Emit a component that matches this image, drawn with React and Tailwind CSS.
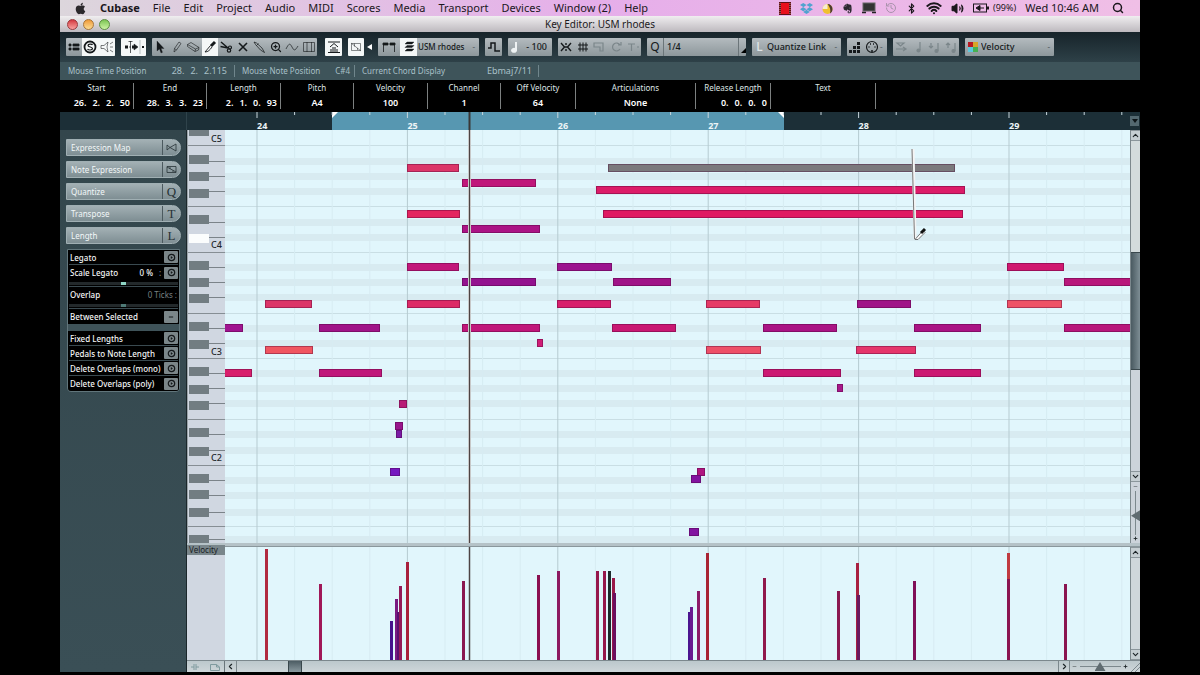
import React, { useState } from "react";
import {
  Bluetooth,
  ChevronDown,
  ChevronLeft,
  ChevronRight,
  ChevronUp,
  History,
  Minus,
  Plus,
  Search,
  Volume2,
  Wifi,
  ZoomIn,
} from "lucide-react";
import { FaApple, FaDropbox, FaEvernote } from "react-icons/fa";

const menus = [
  "File", "Edit", "Project", "Audio", "MIDI", "Scores",
  "Media", "Transport", "Devices", "Window (2)", "Help",
];

const infoLine = [
  { label: "Start", value: ["26.", "2.", "2.", "50"] },
  { label: "End", value: ["28.", "3.", "3.", "23"] },
  { label: "Length", value: ["2.", "1.", "0.", "93"] },
  { label: "Pitch", value: "A4" },
  { label: "Velocity", value: "100" },
  { label: "Channel", value: "1" },
  { label: "Off Velocity", value: "64" },
  { label: "Articulations", value: "None" },
  { label: "Release Length", value: ["0.", "0.", "0.", "0"] },
  { label: "Text", value: "" },
];

// piano roll geometry
const BEAT = 37.6;
const FIRST_BAR = 32;
const blackRows = [31, 46, 61, 92, 107, 137, 152, 167, 198, 213, 243, 258, 273, 304, 320, 350, 365, 382, 409];
const whiteSplits = [15, 76, 122, 183, 228, 289, 335, 396];
const blackKeys = [-3, 25, 42, 59, 85, 104, 131, 148, 164, 192, 210, 237, 255, 271, 298, 317, 344, 360, 378, 405];
const octaves = [
  { name: "C5", y: 12 },
  { name: "C4", y: 118 },
  { name: "C3", y: 225 },
  { name: "C2", y: 331 },
];

// x, top, width, colour
const notes = [
  [182, 34, 52, "#dc3568"],
  [383, 34, 347, "#7b797c"],
  [237, 49, 74, "#c0177a"],
  [371, 56, 369, "#dc1c68"],
  [182, 80, 53, "#e42560"],
  [378, 80, 360, "#e01a63"],
  [237, 95, 78, "#ab1385"],
  [182, 133, 52, "#c2177a"],
  [332, 133, 55, "#9c148f"],
  [782, 133, 57, "#d0186f"],
  [237, 148, 74, "#93128f"],
  [388, 148, 58, "#a01488"],
  [839, 148, 300, "#b8177b"],
  [40, 170, 47, "#dc3568"],
  [182, 170, 53, "#dd2a66"],
  [332, 170, 54, "#d81f6c"],
  [481, 170, 54, "#e63a66"],
  [632, 170, 54, "#a01488"],
  [782, 170, 55, "#ee5266"],
  [-10, 194, 28, "#a01490"],
  [94, 194, 61, "#a01488"],
  [237, 194, 78, "#c0177a"],
  [387, 194, 64, "#c91872"],
  [538, 194, 74, "#aa1484"],
  [689, 194, 67, "#aa1484"],
  [839, 194, 300, "#b8177b"],
  [312, 209, 6, "#cf1d75"],
  [40, 216, 48, "#f05560"],
  [481, 216, 55, "#ee5068"],
  [631, 216, 60, "#e5356a"],
  [-10, 239, 37, "#d81f6c"],
  [94, 239, 63, "#c0177a"],
  [538, 239, 78, "#cc1872"],
  [689, 239, 67, "#cc1872"],
  [612, 254, 6, "#a8188a"],
  [174, 270, 8, "#b81c76"],
  [170, 292, 8, "#99158c"],
  [171, 300, 6, "#7a1aa5"],
  [165, 338, 10, "#7518c0"],
  [472, 338, 8, "#b01680"],
  [466, 345, 10, "#8213a0"],
  [464, 398, 10, "#8213a0"],
];

// x, height, colour
const velocities = [
  [40, 112, "#b02a40"],
  [94, 77, "#a01858"],
  [165, 40, "#45128c"],
  [170, 62, "#7a1a80"],
  [172, 49, "#5a1070"],
  [174, 75, "#941a58"],
  [181, 99, "#a8203c"],
  [237, 80, "#8a1850"],
  [312, 86, "#8a1050"],
  [332, 90, "#8c1a60"],
  [371, 90, "#96184c"],
  [378, 90, "#96184c"],
  [383, 90, "#1c2a2c"],
  [387, 83, "#9a1848"],
  [388, 68, "#6a1060"],
  [463, 49, "#4a1490"],
  [465, 54, "#6a1a90"],
  [472, 70, "#8c1a68"],
  [481, 108, "#a82434"],
  [538, 83, "#90184c"],
  [612, 70, "#8a1850"],
  [631, 98, "#a82040"],
  [632, 66, "#6a1a60"],
  [688, 80, "#801058"],
  [782, 108, "#c03a40"],
  [782, 82, "#8a1450"],
  [839, 77, "#8a1450"],
];

function ToolGroup({ children, className = "" }) {
  return (
    <div className={`flex h-[18px] items-stretch overflow-hidden rounded-[1px] bg-gradient-to-b from-[#b4bbbf] to-[#8d979b] ${className}`}>
      {children}
    </div>
  );
}

function Tool({ label, active, dim, children }) {
  return (
    <button
      aria-label={label}
      className={`flex flex-1 items-center justify-center ${active ? "bg-[#f4f7f7]" : ""} ${dim ? "text-[#7b868a]" : "text-[#15191b]"}`}
    >
      {children}
    </button>
  );
}

function Glyph({ children, fill = "none", width = 14 }) {
  return (
    <svg width={width} height="14" viewBox={`0 0 ${width} 14`} fill={fill} stroke="currentColor" strokeWidth="1.2" className="shrink-0">
      {children}
    </svg>
  );
}

function MenuBar() {
  return (
    <header className="flex h-4 items-center bg-gradient-to-r from-[#dcd6dc] via-[#e6aeea] to-[#f0bfe6] pr-4 pl-[14px] text-[11px] leading-4 text-[#1b171c]">
      <FaApple size={13} className="mr-[13px] text-[#2b282c]" />
      <nav className="flex gap-[13px] whitespace-nowrap">
        <button className="font-bold">Cubase</button>
        {menus.map((m) => (
          <button key={m}>{m}</button>
        ))}
      </nav>
      <div className="ml-auto flex items-center gap-[9px] whitespace-nowrap">
        <svg width="12" height="13" viewBox="0 0 12 13">
          <rect width="12" height="13" fill="#5d1016" />
          <rect x="2" y="1" width="8" height="11" fill="#e8101c" />
          <path d="M1 1v11M11 1v11" stroke="#c98" strokeDasharray="1 1" />
        </svg>
        <FaDropbox size={13} className="text-[#4fa3cf]" />
        <svg width="11" height="11" viewBox="0 0 11 11">
          <circle cx="5.500" cy="6" r="5" fill="#f0c030" />
          <path d="M5.500 6V1a5 5 0 0 0-5 5z" fill="#f6ecd0" />
          <path d="M5.500 1a5 5 0 0 1 5 5c0 2-1 3.500-2.500 4.500C9 7 8 4 5.500 1z" fill="#4a3a30" />
        </svg>
        <FaEvernote size={11} className="text-[#2b2830]" />
        <svg width="14" height="12" viewBox="0 0 14 12">
          <rect x="1" y="1" width="12" height="8" fill="#333" stroke="#666" />
          <path d="M0 10.500h4M10 10.500h4" stroke="#222" strokeWidth="1.500" />
        </svg>
        <History size={12} className="text-[#a892ab]" />
        <Bluetooth size={11} strokeWidth={2.5} />
        <Wifi size={16} strokeWidth={3} />
        <Volume2 size={13} fill="currentColor" />
        <div className="flex items-center gap-1">
          <svg width="16" height="10" viewBox="0 0 16 10" fill="none" stroke="currentColor">
            <rect x=".5" y="1" width="13" height="8" />
            <path d="M15 3.500v3" strokeWidth="2" />
            <path d="M3 5l4-2.500v5zM7 5h4" fill="currentColor" />
          </svg>
          <span className="text-[9px]">(99%)</span>
        </div>
        <span>Wed 10:46 AM</span>
        <Search size={12} strokeWidth={3} className="ml-1" />
      </div>
    </header>
  );
}

function TitleBar() {
  return (
    <div className="relative flex h-4 items-center justify-center bg-gradient-to-b from-[#f0eef0] to-[#bdb9be] text-[10px] leading-4 text-[#1c1a1d]">
      <div className="absolute left-[7px] flex gap-[5px]">
        <button aria-label="Close" className="h-[11px] w-[11px] rounded-full border border-[#9b3a3e] bg-gradient-to-b from-[#d3343f] to-[#f8a0a0]" />
        <button aria-label="Minimize" className="h-[11px] w-[11px] rounded-full border border-[#a8763a] bg-gradient-to-b from-[#ee9a35] to-[#fbdc90]" />
        <button aria-label="Zoom" className="h-[11px] w-[11px] rounded-full border border-[#5c8f42] bg-gradient-to-b from-[#7cc552] to-[#cdf3a4]" />
      </div>
      <h1>Key Editor: USM rhodes</h1>
    </div>
  );
}

function Toolbar() {
  return (
    <div className="flex h-[30px] items-center gap-[6px] bg-gradient-to-b from-[#17242a] to-[#2e4148] px-[6px] text-[8px] font-medium text-[#15191b]">
      <ToolGroup className="w-[49px]">
        <Tool label="Window layout">
          <Glyph fill="currentColor"><path d="M2 4h2v2H2zM6 4h6v2H6zM2 8h2v2H2zM6 8h6v2H6z" strokeWidth=".8" /></Glyph>
        </Tool>
        <Tool label="Solo editor" active>
          <Glyph>
            <circle cx="7" cy="7" r="5.500" strokeWidth="1.800" />
            <path d="M9.500 5C9 3.800 5 3.700 5 5.500s4.500 1.200 4.500 3S5.500 10.500 4.500 9" />
          </Glyph>
        </Tool>
        <Tool label="Acoustic feedback" active>
          <Glyph><path d="M1 5.500h3L8 2l-1 5 1 5-4-3.500H1zM10 4l3-2M10 7h3M10 10l3 2" strokeWidth=".8" opacity=".7" /></Glyph>
        </Tool>
      </ToolGroup>
      <ToolGroup className="w-[25px]">
        <Tool label="Auto-scroll" active>
          <Glyph width={24}>
            <path d="M3 7h3M10 7h3" strokeWidth="3" />
            <path d="M12 4l4 3-4 3z" fill="currentColor" strokeWidth=".5" />
            <path d="M7 7h2M8.500 1v12M6.500 1.500h4" strokeWidth=".7" />
            <path d="M18 0v14" stroke="#a9b1b4" strokeWidth=".8" />
            <path d="M20 7h2" strokeWidth="2" />
          </Glyph>
        </Tool>
      </ToolGroup>
      <ToolGroup className="w-[165px]">
        <Tool label="Select">
          <Glyph fill="currentColor"><path d="M4 1v10l2.500-2 1.500 4 1.500-.7L8 8.500h3z" strokeWidth=".3" /></Glyph>
        </Tool>
        <Tool label="Draw">
          <Glyph><path d="m4 12 .5-3.500 4.500-6.500 2 1.500-4.500 6.500zM4.500 8.500l2 1.500" strokeWidth=".8" opacity=".75" /></Glyph>
        </Tool>
        <Tool label="Erase">
          <Glyph><path d="M1.500 4.500 5 2.500l8 5-.5 2.500L9 11.500l-7.500-5zM1.500 4.500l8 4.500 3.500-1.500M9.500 9 9 11.500" strokeWidth=".8" opacity=".75" /></Glyph>
        </Tool>
        <Tool label="Trim" active>
          <Glyph>
            <path d="m8 6 4-4" strokeWidth="3" />
            <path d="M7.500 5.500 2 12c3 0 5-2 7-5" strokeWidth=".9" />
          </Glyph>
        </Tool>
        <Tool label="Split">
          <Glyph>
            <path d="M2 2l7 6M1.500 6.500 9 8" strokeWidth="1.500" />
            <circle cx="10" cy="10.500" r="1.700" />
            <circle cx="11" cy="7.500" r="1.500" />
          </Glyph>
        </Tool>
        <Tool label="Mute"><Glyph><path d="M3 3l8 8M11 3l-8 8" strokeWidth="1.600" /></Glyph></Tool>
        <Tool label="Glue">
          <Glyph><path d="m2 2 2.500 1 5.500 5 2.500 4.500L8.500 10 3.500 4.500zM4.500 5.500l2-2" strokeWidth=".9" opacity=".8" /></Glyph>
        </Tool>
        <Tool label="Zoom"><ZoomIn size={12} strokeWidth={2.5} /></Tool>
        <Tool label="Line"><Glyph><path d="M1 9c3-6 4-6 6-2s3 4 6-1" strokeWidth=".9" opacity=".75" /></Glyph></Tool>
        <Tool label="Time warp"><Glyph><path d="M1.500 2.500h11v9h-11zM5 2v10M9.500 2v10" strokeWidth=".8" opacity=".75" /></Glyph></Tool>
      </ToolGroup>
      <ToolGroup className="ml-[2px] w-[17px]">
        <Tool label="Show controllers" active>
          <Glyph><path d="M1 2h12M1 12.500h12M3 7l4-3.500L11 7" strokeWidth="1" /><path d="M4 12V9M6 12V7M8 12V7M10 12V9" strokeWidth="1" /></Glyph>
        </Tool>
      </ToolGroup>
      <ToolGroup className="w-[16px]">
        <Tool label="Show note expression" active>
          <Glyph><path d="M2.500 3.500h9v7h-9zM2 3l10 8M5.500 3.500v3M8.500 10V8" strokeWidth=".7" opacity=".7" /></Glyph>
        </Tool>
      </ToolGroup>
      <button aria-label="More tools" className="-ml-[4px] text-white">
        <svg width="6" height="8" viewBox="0 0 6 8" fill="currentColor"><path d="M6 1v6L1 4z" /></svg>
      </button>
      <ToolGroup className="w-[101px]">
        <button aria-label="Part borders" className="flex w-[22px] items-center justify-center">
          <Glyph fill="currentColor"><path d="M1 3h5v2H1zM8 3h5v2H8zM1.500 3v9M12.500 3v9" strokeWidth=".8" /></Glyph>
        </button>
        <button aria-label="Edit active part only" className="flex w-[17px] items-center justify-center bg-[#f4f7f7]">
          <Glyph fill="currentColor"><path d="M5 2h7l-2 2H3zM5 5.500h7l-2 2H3zM5 9h7l-2 2H3z" strokeWidth=".4" /></Glyph>
        </button>
        <select aria-label="Edited part" className="min-w-0 flex-1 appearance-none bg-transparent pl-px">
          <option>USM rhodes</option>
        </select>
        <span className="self-center pr-1 text-[#5d676b]">-</span>
      </ToolGroup>
      <ToolGroup className="w-[17px]">
        <Tool label="Step input"><Glyph><path d="M1 8h3V3h4v8h5" strokeWidth="1.500" /></Glyph></Tool>
      </ToolGroup>
      <ToolGroup className="w-[44px]">
        <svg width="14" height="14" viewBox="0 0 14 14" fill="#eef2f3" className="self-center"><path d="M7 2h2v8a3 2.500 0 1 1-2-2z" /></svg>
        <input aria-label="Insert velocity" defaultValue="- 100" className="w-[25px] min-w-0 bg-transparent text-right text-[9px]" />
      </ToolGroup>
      <ToolGroup className="w-[83px]">
        <Tool label="Snap to zero"><Glyph><path d="M2 3l3.500 4L2 11M12 3 8.500 7l3.500 4M7 3v2M7 9v2M5 7h4" strokeWidth="1.400" /></Glyph></Tool>
        <Tool label="Snap"><Glyph><path d="M4 2.500v9M7 2.500v9M10 2.500v9M2 5h10M2 9h10" strokeWidth="1" /></Glyph></Tool>
        <Tool label="Snap type" dim><Glyph><path d="M2 3h9v8H8V7H2z" /></Glyph></Tool>
        <Tool label="Snap cycle" dim><Glyph><path d="M11 5a4 4 0 1 0 0 4M9 5h3V2" /></Glyph></Tool>
        <Tool label="Snap grid" dim><Glyph><path d="M2 4h7M5.500 4v7M11 7h2" /></Glyph></Tool>
      </ToolGroup>
      <ToolGroup className="w-[99px]">
        <span className="w-[17px] border-r border-[#6b7579] text-center text-[12px] leading-[18px] font-normal">Q</span>
        <select aria-label="Quantize preset" className="min-w-0 flex-1 appearance-none bg-transparent pl-[3px] text-[9px]">
          <option>1/4</option>
        </select>
        <span className="flex w-2 items-end justify-end border-l border-[#6b7579] pb-[3px]">
          <svg width="5" height="5"><path d="M5 0v5H0z" /></svg>
        </span>
      </ToolGroup>
      <ToolGroup className="w-[89px]">
        <span className="w-[15px] text-center text-[12px] leading-[18px] text-[#dfe5e7]">L</span>
        <select aria-label="Length quantize" className="min-w-0 flex-1 appearance-none bg-transparent text-[9px]">
          <option>Quantize Link</option>
        </select>
        <span className="self-center pr-1 text-[#5d676b]">-</span>
      </ToolGroup>
      <ToolGroup className="w-[40px]">
        <Tool label="Step input mode">
          <svg width="12" height="12" viewBox="0 0 12 12" fill="currentColor">
            <path d="M0 9h3v3H0zM4 9h3v3H4zM8 9h3v3H8zM4 5h3v3H4zM8 5h3v3H8zM8 1h3v3H8z" />
          </svg>
        </Tool>
        <Tool label="MIDI input">
          <Glyph>
            <circle cx="7" cy="7" r="5.500" />
            <path d="M3.500 7h1M5 4h1M8 4h1M9.500 7h1M7 10v2" strokeWidth="1.500" />
          </Glyph>
        </Tool>
        <span className="w-[7px] self-center text-[#5d676b]">-</span>
      </ToolGroup>
      <ToolGroup className="w-[66px]">
        <Tool label="Move insert position" dim><Glyph><path d="M3 3h7L6.500 6zM2 9h9M9 7l3 2-3 2" /></Glyph></Tool>
        <Tool label="Record pitch" dim><Glyph><path d="M9 2v8" /><circle cx="7.500" cy="10.500" r="1.500" fill="currentColor" /></Glyph></Tool>
        <Tool label="Record note-on velocity" dim><Glyph><path d="M11 3v8M4 3v5M2 6l2 2 2-2" /><circle cx="9.500" cy="11" r="1.500" fill="currentColor" /></Glyph></Tool>
        <Tool label="Record note-off velocity" dim><Glyph><path d="M11 3v8M4 8V3M2 5l2-2 2 2" /><circle cx="9.500" cy="11" r="1.500" fill="currentColor" /></Glyph></Tool>
      </ToolGroup>
      <ToolGroup className="w-[89px]">
        <svg width="10" height="10" viewBox="0 0 10 10" className="mx-[3px] shrink-0 self-center">
          <rect width="10" height="10" fill="#333" />
          <rect width="5" height="5" fill="#b81822" />
          <rect x="5" width="5" height="5" fill="#d8a428" />
          <rect y="5" width="5" height="5" fill="#5cc8dc" />
          <rect x="5" y="5" width="5" height="5" fill="#46b052" />
        </svg>
        <select aria-label="Event colors" className="min-w-0 flex-1 appearance-none bg-transparent text-[9px]">
          <option>Velocity</option>
        </select>
        <span className="self-center pr-1 text-[#5d676b]">-</span>
      </ToolGroup>
    </div>
  );
}

function StatusLine() {
  return (
    <div className="flex h-[18px] items-center bg-[#3e545a] text-[8px] leading-[12px] whitespace-nowrap text-[#a9c0c8]">
      <div className="flex w-[175px] justify-between border-r border-[#70868c] pr-[7px] pl-2">
        <span>Mouse Time Position</span>
        <span className="flex gap-[6px] text-[9px]"><span>28.</span><span>2.</span><span>2.115</span></span>
      </div>
      <div className="flex w-[120px] justify-between border-r border-[#70868c] pr-[4px] pl-[7px]">
        <span>Mouse Note Position</span>
        <span>C#4</span>
      </div>
      <div className="flex w-[184px] justify-between border-r border-[#70868c] pr-[6px] pl-[7px]">
        <span>Current Chord Display</span>
        <span className="text-[9px]">Ebmaj7/11</span>
      </div>
    </div>
  );
}

function InfoLine() {
  return (
    <dl className="grid h-8 grid-cols-[74px_73px_74px_73px_74px_73px_75px_120px_75px_105px] bg-black py-[3px] whitespace-nowrap text-white">
      {infoLine.map((f) => (
        <div key={f.label} className="border-r border-[#7c8080] text-center">
          <dt className="text-[8px] leading-[10px] text-[#dfe5e6]">{f.label}</dt>
          {Array.isArray(f.value) ? (
            <dd className="mt-1 flex justify-end gap-[6px] pr-[3px] text-[9px] leading-[12px] font-semibold">
              {f.value.map((v, i) => (
                <span key={i}>{v}</span>
              ))}
            </dd>
          ) : (
            <dd className="mt-1 text-[9px] leading-[12px] font-semibold">{f.value}</dd>
          )}
        </div>
      ))}
    </dl>
  );
}

function Ruler() {
  const start = 70;
  const ticks = Array.from({ length: 60 }, (_, i) => i);
  return (
    <div className="flex h-[18px] items-start bg-[#1c2f37]">
      <div className="h-full w-[127px] border-r border-[#2f434b]" />
      {/* taller than the bar, the lanes below cover the rest */}
      <svg className="h-[24px] min-w-0 flex-1">
        <rect x="145" y="0" width="452" height="18" fill="#5797b1" />
        <path d="M145 0h6l-6 6zM597 0h-6l6 6z" fill="#fff" />
        {ticks.map((i) => (
          <line key={i} x1={start + i * BEAT} x2={start + i * BEAT} y1="0" y2={i % 4 ? 3 : 6} stroke="#c7d6dc" />
        ))}
        {[24, 25, 26, 27, 28, 29].map((bar, i) => (
          <text key={bar} x={start + i * 4 * BEAT} y="17" fontSize="9" fontWeight="700" fill="#eef5f7">
            {bar}
          </text>
        ))}
        <path d="M282.500 0v18" stroke="#3a3635" strokeWidth="2" />
      </svg>
      <button aria-label="Ruler format" className="mt-[4px] mr-[1px] flex h-[10px] w-[9px] items-center justify-center bg-[#536870] text-[#0d1518]">
        <svg width="6" height="4"><path d="M0 0h6L3 4z" fill="currentColor" /></svg>
      </button>
    </div>
  );
}

function SectionHeader({ label, open, children }) {
  return (
    <button
      aria-expanded={open}
      className="flex h-[17px] w-[115px] items-center overflow-hidden rounded-l-[2px] rounded-r-full border border-[#a0afb3] bg-gradient-to-b from-[#a3b0b4] to-[#7e8e93] text-left text-[8px] text-[#f2f7f8]"
    >
      <span className="flex-1 pl-1">{label}</span>
      <span className="flex h-full w-[18px] items-center justify-center border-l border-[#4c5a5f] font-['Liberation_Serif',serif] text-[13px] leading-none text-[#273236]">
        {children}
      </span>
    </button>
  );
}

function ApplyButton({ label }) {
  return (
    <button aria-label={label} className="flex h-[12px] w-[14px] items-center justify-center rounded-[1px] bg-[#7b8689] text-[#15191b]">
      <svg width="9" height="9" viewBox="0 0 9 9" fill="none" stroke="currentColor">
        <circle cx="4.500" cy="4.500" r="3.200" strokeWidth="1.200" />
        <path d="M4 3.500v2l1.500-1z" fill="currentColor" strokeWidth=".5" />
      </svg>
    </button>
  );
}

function ParamSlider({ label, value, onChange, dim }) {
  return (
    <input
      type="range"
      aria-label={label}
      value={value}
      onChange={(e) => onChange(Number(e.target.value))}
      className={`block h-[3px] w-full appearance-none bg-[#23292b] [&::-webkit-slider-thumb]:h-[3px] [&::-webkit-slider-thumb]:w-[5px] [&::-webkit-slider-thumb]:appearance-none ${
        dim ? "[&::-webkit-slider-thumb]:bg-[#4e7a76]" : "[&::-webkit-slider-thumb]:bg-[#8fd6c6]"
      }`}
    />
  );
}

function Inspector() {
  const [scale, setScale] = useState(50);
  const [overlap, setOverlap] = useState(50);

  return (
    <aside className="flex w-[127px] shrink-0 flex-col gap-[5px] border-r border-[#1b272b] bg-gradient-to-b from-[#33464c] to-[#3a4f56] pt-[9px] pl-[6px]">
      <SectionHeader label="Expression Map">
        <svg width="11" height="9" viewBox="0 0 11 9" fill="none" stroke="currentColor"><path d="M1 2v5l3-2.500zM4 4.500 10 1v7z" strokeWidth=".8" /></svg>
      </SectionHeader>
      <SectionHeader label="Note Expression">
        <svg width="11" height="9" viewBox="0 0 11 9" fill="none" stroke="currentColor"><path d="M1 1.500h9v6H1zM1 2l9 5M4 2v2M7 7V5.500" strokeWidth=".8" /></svg>
      </SectionHeader>
      <SectionHeader label="Quantize">Q</SectionHeader>
      <SectionHeader label="Transpose">T</SectionHeader>
      <SectionHeader label="Length" open>L</SectionHeader>

      <div className="ml-px w-[113px] rounded-b-[4px] border border-[#61757b] text-[8px] leading-[13px] font-medium text-[#f4f6f6]">
        <div className="bg-black px-px">
          <div className="flex h-[15px] items-center justify-between border-b border-[#3a4a50] pl-[1px]">
            Legato
            <ApplyButton label="Apply legato" />
          </div>
          <div className="flex h-[15px] items-center pl-[1px]">
            <span className="flex-1">Scale Legato</span>
            <span className="pr-[6px]">0 %</span>
            <span className="w-[5px] text-[#889]">:</span>
            <ApplyButton label="Scale legato" />
          </div>
          <div className="border-b border-[#3a4a50] pt-[2px] pb-px">
            <ParamSlider label="Scale Legato" value={scale} onChange={setScale} />
          </div>
          <div className="flex h-[15px] items-center justify-between pl-[1px]">
            <span>Overlap</span>
            <span className="pr-px font-normal text-[#788083]">0 Ticks :</span>
          </div>
          <div className="border-b border-[#3a4a50] pt-[2px] pb-px">
            <ParamSlider label="Overlap" value={overlap} onChange={setOverlap} dim />
          </div>
          <div className="flex h-[15px] items-center justify-between pl-[1px]">
            Between Selected
            <button aria-label="Between selected" className="flex h-[12px] w-[14px] items-center justify-center rounded-[1px] bg-[#7b8689] text-[#15191b]">
              <Minus size={6} strokeWidth={4} />
            </button>
          </div>
        </div>
        <div className="h-[7px] bg-[#3f5359]" />
        <div className="overflow-hidden rounded-b-[3px] bg-black px-px">
          {["Fixed Lengths", "Pedals to Note Length", "Delete Overlaps (mono)", "Delete Overlaps (poly)"].map((name) => (
            <div key={name} className="flex h-[15px] items-center justify-between border-b border-[#3a4a50] pl-[1px] whitespace-nowrap last:border-b-0">
              {name}
              <ApplyButton label={name} />
            </div>
          ))}
        </div>
      </div>
    </aside>
  );
}

function Keyboard() {
  return (
    <svg className="h-[413px] w-[38px] shrink-0 bg-[#d0d7e1]">
      {blackRows.map((y) => (
        <path key={y} d={`M22 ${y + 0.5}h16`} stroke="#7b8389" />
      ))}
      {whiteSplits.map((y) => (
        <path key={y} d={`M0 ${y + 0.5}h38`} stroke="#868e94" />
      ))}
      {blackKeys.map((y) => (
        <rect key={y} x="2" y={y} width="20" height="9" fill={y === 104 ? "#fbfdfd" : "#727d82"} />
      ))}
      {octaves.map((o) => (
        <text key={o.name} x="24" y={o.y} fontSize="9" fontWeight="500" fill="#23282c">
          {o.name}
        </text>
      ))}
      <path d="M.5 0v413" stroke="#9aa3a8" />
    </svg>
  );
}

function BeatLines({ height }) {
  return Array.from({ length: 60 }, (_, i) => (
    <line
      key={i}
      x1={FIRST_BAR + i * BEAT}
      x2={FIRST_BAR + i * BEAT}
      y1="0"
      y2={height}
      stroke={i % 4 ? "#d7ecf2" : "#b6cbd1"}
    />
  ));
}

function NoteGrid() {
  return (
    <svg className="h-[413px] min-w-0 flex-1 bg-[#e1f6fc]">
      {blackRows.map((y) => (
        <rect key={y} x="0" y={y - 3} width="100%" height="7" fill="#d8ebf1" />
      ))}
      {whiteSplits.map((y) => (
        <rect key={y} x="0" y={y} width="100%" height="1" fill="#c9dee4" />
      ))}
      <BeatLines height="413" />
      {notes.map(([x, y, w, color], i) => (
        <g key={i}>
          <rect x={x} y={y} width={w} height="8" fill={color} />
          <rect x={x + 0.5} y={y + 0.5} width={w - 1} height="7" fill="none" stroke="#400030" strokeOpacity=".35" />
        </g>
      ))}
      {/* playhead */}
      <path d="M244.500 0v413" stroke="#f0f4f4" strokeWidth="3" />
      <path d="M244.500 0v413" stroke="#4d4444" strokeWidth="1.500" />
      {/* trim tool drag */}
      <path d="M688 19l2 90" stroke="#f4f4f4" strokeWidth="3" />
      <path d="M687 19l2.500 90" stroke="#777" fill="none" />
      <path d="M690 109.500h3l7-7-2-2z" fill="#fff" stroke="#555" strokeWidth=".8" />
      <path d="M696 103l4-4" stroke="#111" strokeWidth="3" />
    </svg>
  );
}

function VelocityLane() {
  return (
    <svg className="h-[113px] min-w-0 flex-1 bg-[#e1f6fc]">
      <BeatLines height="113" />
      {velocities.map(([x, h, color], i) => (
        <rect key={i} x={x} y={114 - h} width="3" height={h} fill={color} />
      ))}
      <path d="M244.500 0v113" stroke="#4d4444" strokeWidth="1.500" />
    </svg>
  );
}

function ScrollButton({ label, children }) {
  return (
    <button aria-label={label} className="flex h-[11px] w-full shrink-0 items-center justify-center border-y border-[#8b969b] bg-[#c5ced2] text-[#1c2427]">
      {children}
    </button>
  );
}

function PianoRoll() {
  const [vZoom, setVZoom] = useState(40);
  const [hZoom, setHZoom] = useState(50);

  return (
    <section className="min-w-0 flex-1 bg-[#b9c6ca]">
      <div className="flex">
        <Keyboard />
        <NoteGrid />
        <div className="flex w-[10px] shrink-0 flex-col border-l border-[#7c888d] bg-[#ccd3da]">
          <ScrollButton label="Scroll up"><ChevronUp size={9} strokeWidth={3} /></ScrollButton>
          <div className="flex flex-1 flex-col">
            <div className="h-[111px] bg-[#d3dbdc]" />
            <div className="h-[118px] border-y border-[#39474c] bg-gradient-to-r from-[#4a5a61] to-[#7e8e95]" />
          </div>
          <ScrollButton label="Scroll down"><ChevronDown size={9} strokeWidth={3} /></ScrollButton>
          <div className="flex h-[61px] flex-col items-center justify-between py-[2px] text-[#1c2427]">
            <Minus size={5} />
            <input
              type="range"
              aria-label="Vertical zoom"
              value={vZoom}
              onChange={(e) => setVZoom(Number(e.target.value))}
              className="h-[44px] w-[9px] appearance-none bg-[linear-gradient(90deg,transparent_4px,#7c888d_4px,#7c888d_5px,transparent_5px)] [direction:rtl] [writing-mode:vertical-lr] [&::-webkit-slider-thumb]:h-[11px] [&::-webkit-slider-thumb]:w-[9px] [&::-webkit-slider-thumb]:appearance-none [&::-webkit-slider-thumb]:bg-[#5f6b70] [&::-webkit-slider-thumb]:[clip-path:polygon(0_50%,100%_0,100%_100%)]"
            />
            <Plus size={5} strokeWidth={4} />
          </div>
        </div>
      </div>

      <div className="h-1 border-b border-[#8a979c] bg-[#b5c2c7]" />

      <div className="flex">
        <div className="w-[38px] shrink-0 bg-[#d0d7e1]">
          <button className="-mt-[2px] block h-[10px] w-full bg-[#79868b] pl-[2px] text-left text-[8px] leading-[10px] text-[#1b2225]">Velocity</button>
        </div>
        <VelocityLane />
        <div className="flex w-[10px] shrink-0 flex-col justify-between border-l border-[#7c888d] bg-[#cfd7db]">
          <ScrollButton label="Scroll lane up"><ChevronUp size={9} strokeWidth={3} /></ScrollButton>
          <ScrollButton label="Scroll lane down"><ChevronDown size={9} strokeWidth={3} /></ScrollButton>
        </div>
      </div>

      <div className="flex h-[12px] items-center border-t border-[#7c888d] bg-gradient-to-b from-[#bcc8cc] to-[#ced6d9] text-[#1c2427]">
        <div className="flex h-full w-[38px] items-center justify-between border-r border-[#69757a] px-1 text-[#7f9a9e]">
          <svg width="8" height="8" viewBox="0 0 8 8" fill="none" stroke="currentColor"><path d="M3 1v6M5 1v6M0 4h3M5 4h3" /></svg>
          <svg width="10" height="8" viewBox="0 0 10 8" fill="none" stroke="currentColor"><path d="M.5 1.500h6l3 2.500v3.500h-9zM6.500 1.500V4h3" /></svg>
        </div>
        <button aria-label="Scroll left" className="flex h-full w-[12px] items-center justify-center border-r border-[#7c888d]"><ChevronLeft size={9} strokeWidth={3} /></button>
        <div className="flex h-full flex-1">
          <div className="ml-[51px] h-full w-[14px] border-x border-[#39474c] bg-gradient-to-b from-[#4d5d64] to-[#8b9aa0]" />
        </div>
        <button aria-label="Scroll right" className="flex h-full w-[12px] items-center justify-center border-x border-[#7c888d]"><ChevronRight size={9} strokeWidth={3} /></button>
        <div className="flex w-[60px] items-center justify-between px-[2px]">
          <Minus size={5} />
          <input
            type="range"
            aria-label="Horizontal zoom"
            value={hZoom}
            onChange={(e) => setHZoom(Number(e.target.value))}
            className="h-[10px] w-[41px] appearance-none bg-[linear-gradient(transparent_4px,#7c888d_4px,#7c888d_5px,transparent_5px)] [&::-webkit-slider-thumb]:h-[9px] [&::-webkit-slider-thumb]:w-[11px] [&::-webkit-slider-thumb]:appearance-none [&::-webkit-slider-thumb]:bg-[#5f6b70] [&::-webkit-slider-thumb]:[clip-path:polygon(50%_0,100%_100%,0_100%)]"
          />
          <Plus size={5} strokeWidth={4} />
        </div>
        <svg width="10" height="11" stroke="#7c888d"><path d="M1 11 10 2M5 11l5-5" /></svg>
      </div>
    </section>
  );
}

export default function App() {
  return (
    <div className="min-h-screen bg-black px-[5%] font-['Noto_Sans',sans-serif]">
      <MenuBar />
      <TitleBar />
      <Toolbar />
      <StatusLine />
      <InfoLine />
      <Ruler />
      <main className="flex">
        <Inspector />
        <PianoRoll />
      </main>
    </div>
  );
}
